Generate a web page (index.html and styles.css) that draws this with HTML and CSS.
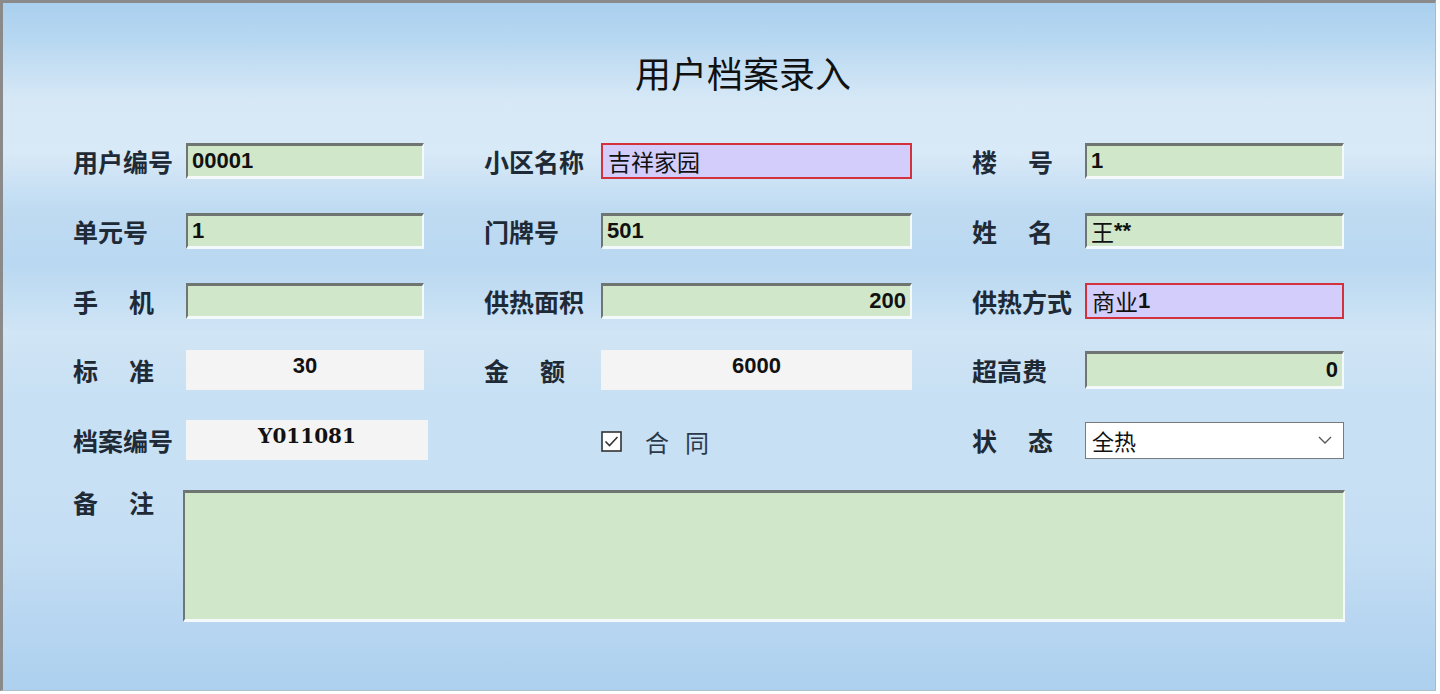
FILE: index.html
```html
<!DOCTYPE html>
<html lang="zh-CN">
<head>
  <meta charset="UTF-8" />
  <title>用户档案录入</title>
  <link rel="stylesheet" href="styles.css">
</head>
<body>
  <div class="win">
    <h1 class="title">用户档案录入</h1>

    <div class="form">
      <!-- row 1 -->
      <div class="field">
        <span class="lbl">用户编号</span>
        <div class="box in">00001</div>
      </div>
      <div class="field c2">
        <span class="lbl">小区名称</span>
        <div class="box req"><span class="cn">吉祥家园</span></div>
      </div>
      <div class="field">
        <span class="lbl two">楼号</span>
        <div class="box in">1</div>
      </div>

      <!-- row 2 -->
      <div class="field">
        <span class="lbl">单元号</span>
        <div class="box in">1</div>
      </div>
      <div class="field c2">
        <span class="lbl">门牌号</span>
        <div class="box in">501</div>
      </div>
      <div class="field">
        <span class="lbl two">姓名</span>
        <div class="box in"><span class="cn">王</span>**</div>
      </div>

      <!-- row 3 -->
      <div class="field">
        <span class="lbl two">手机</span>
        <div class="box in"></div>
      </div>
      <div class="field c2">
        <span class="lbl">供热面积</span>
        <div class="box in num">200</div>
      </div>
      <div class="field">
        <span class="lbl">供热方式</span>
        <div class="box req"><span class="cn">商业</span>1</div>
      </div>

      <!-- row 4 -->
      <div class="field tall">
        <span class="lbl two">标准</span>
        <div class="box ro">30</div>
      </div>
      <div class="field c2 tall">
        <span class="lbl two">金额</span>
        <div class="box ro">6000</div>
      </div>
      <div class="field tall">
        <span class="lbl">超高费</span>
        <div class="box in num short">0</div>
      </div>

      <!-- row 5 -->
      <div class="field tall">
        <span class="lbl">档案编号</span>
        <div class="box ro code">Y011081</div>
      </div>
      <div class="field c2 tall">
        <label class="check">
          <span class="tick">
            <svg width="21" height="21" viewBox="0 0 21 21">
              <rect x="1" y="1" width="19" height="19" fill="#fff" stroke="#333" stroke-width="1.6"/>
              <path d="M4.5 10.5 L8.5 14.5 L16.5 6" fill="none" stroke="#333" stroke-width="1.6"/>
            </svg>
          </span>
          <span class="check-txt">合同</span>
        </label>
      </div>
      <div class="field tall">
        <span class="lbl two">状态</span>
        <div class="box sel">
          <span class="cn">全热</span>
          <svg class="chev" width="14" height="8" viewBox="0 0 14 8">
            <path d="M1 1 L7 7 L13 1" fill="none" stroke="#555" stroke-width="1.3"/>
          </svg>
        </div>
      </div>
    </div>

    <div class="memo">
      <span class="lbl two">备注</span>
      <div class="box in memo-box"></div>
    </div>
  </div>
</body>
</html>
```

FILE: styles.css
```css
body { margin: 0; background: #fff; }

.win {
  width: 1432px;
  height: 687px;
  border-top: 3px solid #8a8a8a;
  border-left: 3px solid #8a8a8a;
  border-right: 1px solid #a4bccd;
  border-bottom: 1px solid #aebfcc;
  background: linear-gradient(to bottom,
    #a9cfee 0%, #b6d7f1 5%, #d6e8f6 14%, #d8e9f7 22%,
    #bfdbf2 30%, #b9d8f1 38%, #d0e5f5 48%, #c8e0f4 58%,
    #c8e0f4 70%, #c3ddf3 80%, #b8d6f1 90%, #acd0ee 100%);
  font-family: "Noto Sans CJK SC", sans-serif;
  color: #1e2a36;
}

.title {
  margin: 0;
  padding: 44px 0 0 48px;
  height: 50px;
  line-height: 50px;
  text-align: center;
  font-size: 36px;
  font-weight: normal;
  color: #111;
}

.form {
  margin-top: 46px;
  padding-left: 70px;
  display: grid;
  grid-template-columns: 351px 428px 372px;
  grid-template-rows: 70px 70px 67px 70px 70px;
  column-gap: 60px;
  align-items: start;
}

.field { display: flex; align-items: center; height: 36px; }
.field.tall { height: 40px; }

.lbl {
  flex: 0 0 113px;
  min-width: 0;
  font-size: 25px;
  font-weight: bold;
  line-height: 30px;
  white-space: nowrap;
}
.c2 .lbl { flex-basis: 117px; }
.lbl.two { letter-spacing: 31px; }

.box {
  box-sizing: border-box;
  flex: 1;
  height: 100%;
  padding: 0 4px;
  display: flex;
  align-items: center;
  font-family: "Liberation Sans", "Noto Sans CJK SC", sans-serif;
  font-weight: bold;
  font-size: 22px;
  color: #111;
}
.box .cn { font-family: "Noto Sans CJK SC", sans-serif; font-weight: normal; font-size: 23px; }

.in {
  background: #d0e8c9;
  border-top: 3px solid #6f7570;
  border-left: 2px solid #6f7570;
  border-right: 2px solid #f4fafc;
  border-bottom: 3px solid #f4fafc;
}
.num { justify-content: flex-end; }
.short { height: 38px; }

.req {
  background: #d2cdfa;
  border: 2px solid #d3323c;
  padding-left: 5px;
}

.ro {
  background: #f4f4f4;
  justify-content: center;
  align-items: flex-start;
  padding-top: 3px;
}
.code {
  flex: 0 0 242px;
  font-family: "DejaVu Serif", serif;
  font-size: 20px;
  padding-top: 4px;
}

.sel {
  background: #fff;
  border: 1px solid #7a7a7a;
  height: 37px;
  padding-left: 6px;
  justify-content: space-between;
}
.sel .cn { font-size: 22px; }
.chev { margin-right: 7px; }

.check {
  display: flex;
  align-items: center;
  padding-left: 117px;
  padding-top: 2px;
}
.tick { display: flex; margin-right: 23px; }
.check-txt {
  font-size: 24px;
  letter-spacing: 16px;
  color: #2a3a4a;
}

.memo {
  display: flex;
  align-items: flex-start;
  padding-left: 70px;
}
.memo .lbl { flex-basis: 110px; margin-top: -3px; }
.memo-box { flex: 0 0 1162px; height: 132px; }
```
